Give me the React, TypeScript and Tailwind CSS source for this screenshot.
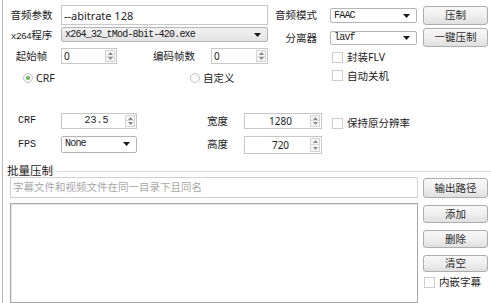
import React from "react";

const Btn = ({ label, cls }: { label: string; cls: string }) => (
  <div
    className={`flex items-center justify-center rounded-[3px] border border-[#adadad] bg-linear-to-b from-[#f8f8f8] via-[#efefef] to-[#e0e0e0] text-[10.5px] leading-none text-[#2a2a2a] ${cls}`}
  >
    {label}
  </div>
);

const Arrow = () => (
  <svg width="7" height="4" viewBox="0 0 7 4" className="shrink-0">
    <path d="M0 0 L7 0 L3.5 4 Z" fill="#1a1a1a" />
  </svg>
);

const Select = ({ text, cls, gray }: { text: string; cls: string; gray?: boolean }) => (
  <div
    className={`flex items-center rounded-[2px] border border-[#b5b5b5] pl-[3px] pr-[6px] ${
      gray ? "bg-linear-to-b from-[#f2f2f2] to-[#e2e2e2]" : "bg-white"
    } ${cls}`}
  >
    <span className="flex-1 font-['Liberation_Mono',monospace] text-[10px] tracking-[-0.8px] leading-none text-[#1a1a1a] whitespace-nowrap">
      {text}
    </span>
    <Arrow />
  </div>
);

const Spinner = () => (
  <div className="my-[1px] mr-[1px] flex w-[10px] flex-col border border-[#d4d4d4] bg-[#f6f6f6]">
    <div className="flex flex-1 items-center justify-center border-b border-[#dadada]">
      <svg width="5" height="3" viewBox="0 0 5 3">
        <path d="M0 3 L5 3 L2.5 0 Z" fill="#8a8a8a" />
      </svg>
    </div>
    <div className="flex flex-1 items-center justify-center">
      <svg width="5" height="3" viewBox="0 0 5 3">
        <path d="M0 0 L5 0 L2.5 3 Z" fill="#8a8a8a" />
      </svg>
    </div>
  </div>
);

const Spin = ({ value, cls, center, mono }: { value: string; cls: string; center?: boolean; mono?: boolean }) => (
  <div className={`flex border border-[#c8c8c8] bg-white ${cls}`}>
    <div
      className={`flex flex-1 items-center ${center ? "justify-center pl-[6px]" : "pl-[2px]"} ${
        mono ? "font-['Liberation_Mono',monospace] text-[10px]" : "text-[10px]"
      } leading-none text-[#222]`}
    >
      {value}
    </div>
    <Spinner />
  </div>
);

const Check = ({ label, cls }: { label: string; cls?: string }) => (
  <div className={`flex items-center ${cls ?? ""}`}>
    <div className="h-[11px] w-[11px] border border-[#cdcdcd] bg-white" />
    <span className="ml-[4px] text-[10.5px] leading-none text-[#222]">{label}</span>
  </div>
);

const Radio = ({ label, on }: { label: string; on?: boolean }) => (
  <div className="flex items-center">
    <div className="flex h-[10px] w-[10px] items-center justify-center rounded-full border border-[#c4c4c4] bg-linear-to-b from-[#f4f4f4] to-white">
      {on && <div className="h-[4px] w-[4px] rounded-full bg-[#6cb35a]" />}
    </div>
    <span className="ml-[3px] text-[10.5px] leading-none text-[#222]">{label}</span>
  </div>
);

export default function App() {
  return (
    <div className="flex h-[303px] w-[491px] overflow-hidden bg-white pl-[2px] font-['Noto_Sans','Noto_Sans_CJK_SC',sans-serif] text-[#1e1e1e]">
      <div className="flex flex-1 flex-col border-l border-[#b9b9b9]">
        {/* Row 1 */}
        <div className="mt-[5px] flex h-[21px] items-start">
          <div className="w-[57px] text-center text-[10.5px] leading-[20px]">音频参数</div>
          <div className="ml-[1px] flex h-[20px] w-[207px] items-center border border-[#c8c8c8] bg-white pl-[2px] text-[11px] leading-none text-[#222]">
            --abitrate 128
          </div>
          <div className="w-[49px] text-right text-[10.5px] leading-[20px]">音频模式</div>
          <Select text="FAAC" cls="ml-[13px] mt-[3px] h-[15px] w-[87px]" />
          <Btn label="压制" cls="ml-[6px] mt-[1px] h-[19px] w-[65px]" />
        </div>
        {/* Row 2 */}
        <div className="mt-[2px] flex h-[21px] items-start">
          <div className="w-[57px] text-center text-[10.5px] leading-[16px]">
            <span className="font-['Liberation_Mono',monospace] text-[9.5px] tracking-[-0.6px]">x264</span>程序
          </div>
          <Select text="x264_32_tMod-8bit-420.exe" gray cls="ml-[1px] h-[15px] w-[207px]" />
          <div className="mt-[3px] w-[49px] text-right text-[10.5px] leading-[16px]">分离器</div>
          <Select text="lavf" cls="ml-[13px] mt-[4px] h-[14px] w-[87px]" />
          <Btn label="一键压制" cls="ml-[6px] mt-[1px] h-[19px] w-[65px]" />
        </div>
        {/* Row 3 */}
        <div className="flex h-[18px] items-start">
          <div className="mt-[1px] w-[57px] text-center text-[10.5px] leading-[16px]">起始帧</div>
          <Spin value="0" cls="ml-[1px] mt-[1px] h-[16px] w-[56px]" />
          <div className="mt-[1px] w-[78px] text-right text-[10.5px] leading-[16px]">编码帧数</div>
          <Spin value="0" cls="ml-[16px] mt-[1px] h-[16px] w-[57px]" />
          <Check label="封装FLV" cls="ml-[64px] mt-[5px]" />
        </div>
        {/* Row 4 */}
        <div className="mt-[6px] flex h-[18px] items-center">
          <div className="ml-[20px] w-[167px]">
            <Radio label="CRF" on />
          </div>
          <div className="w-[142px]">
            <Radio label="自定义" />
          </div>
          <Check label="自动关机" cls="-mt-[5px]" />
        </div>
        {/* Row 5 */}
        <div className="mt-[26px] flex h-[16px] items-start">
          <div className="w-[58px] pl-[15px] font-['Liberation_Mono',monospace] text-[10px] leading-[16px] text-[#1a1a1a]">
            CRF
          </div>
          <Spin value="23.5" mono center cls="h-[16px] w-[76px]" />
          <div className="ml-[70px] w-[37px] text-[10.5px] leading-[16px]">宽度</div>
          <Spin value="1280" center cls="h-[16px] w-[78px]" />
          <Check label="保持原分辨率" cls="ml-[10px] mt-[5px]" />
        </div>
        {/* Row 6 */}
        <div className="mt-[7px] flex h-[18px] items-start">
          <div className="w-[58px] pl-[15px] font-['Liberation_Mono',monospace] text-[10px] leading-[17px] text-[#1a1a1a]">
            FPS
          </div>
          <Select text="None" cls="h-[17px] w-[76px]" />
          <div className="ml-[70px] w-[37px] text-[10.5px] leading-[17px]">高度</div>
          <Spin value="720" center cls="h-[18px] w-[78px]" />
        </div>
        {/* Group title */}
        <div className="mt-[10px] flex h-[14px] items-center">
          <span className="ml-[4px] text-[11.5px] leading-none text-[#1a1a1a]">批量压制</span>
          <div className="ml-[2px] mt-[2px] h-px flex-1 bg-[#dcdcdc]" />
        </div>
        {/* Row 7 */}
        <div className="flex h-[21px] items-start">
          <div className="ml-[7px] flex h-[21px] w-[408px] items-center border border-[#d0d0d0] bg-white pl-[2px] text-[10.5px] leading-none text-[#a8a8a8]">
            字幕文件和视频文件在同一目录下且同名
          </div>
          <Btn label="输出路径" cls="ml-[5px] mt-[1px] h-[20px] w-[65px]" />
        </div>
        {/* Row 8 */}
        <div className="mt-[5px] flex flex-1 items-start">
          <div className="ml-[7px] h-[100px] w-[408px] border border-[#a8a8a8] bg-white shadow-[inset_1px_1px_0_#e4e4e4]" />
          <div className="ml-[5px] flex w-[65px] flex-col">
            <Btn label="添加" cls="mt-[2px] h-[18px] w-[65px]" />
            <Btn label="删除" cls="mt-[7px] h-[18px] w-[65px]" />
            <Btn label="清空" cls="mt-[7px] h-[17px] w-[65px]" />
            <Check label="内嵌字幕" cls="ml-[1px] mt-[5px]" />
          </div>
        </div>
      </div>
    </div>
  );
}
